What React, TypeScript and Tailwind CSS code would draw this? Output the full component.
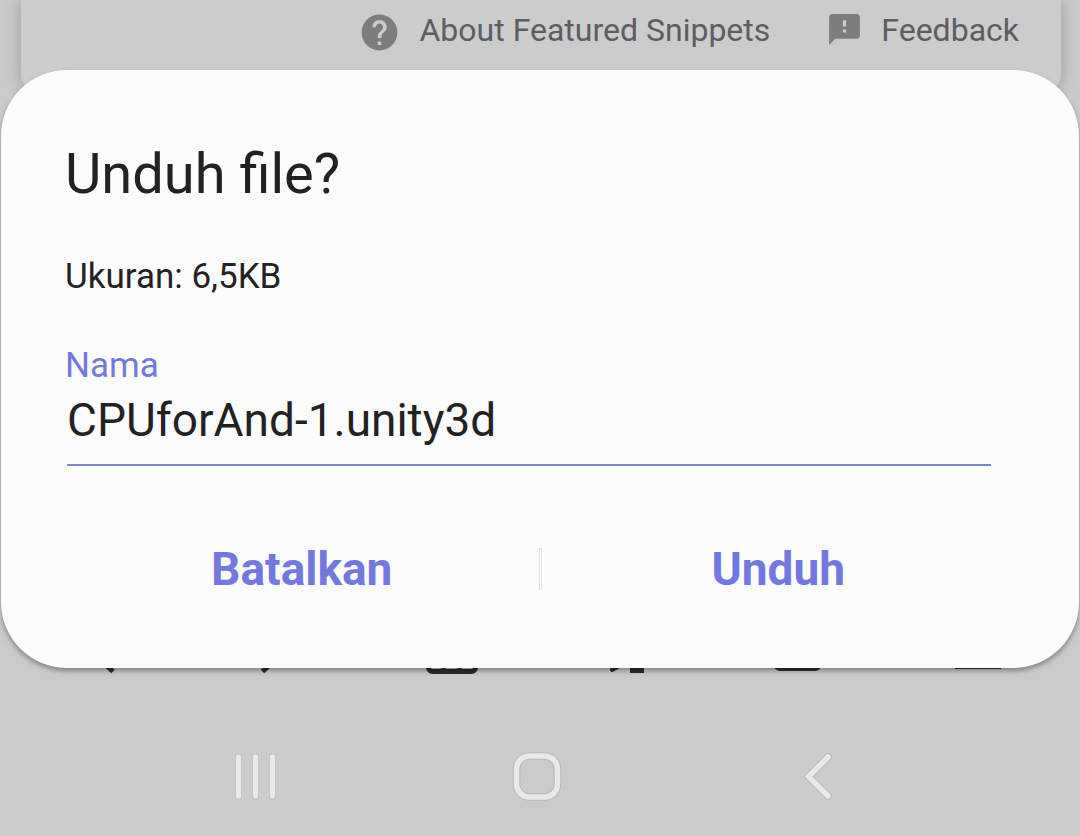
import React, { useState } from "react";
import { MdFeedback, MdHelp } from "react-icons/md";

// Browser bar at the bottom of the page, mostly hidden by the dialog
const toolbarItems = [
  { label: "Kembali", icon: <path d="M38 51.500 12 28 38 5" strokeWidth="5" /> },
  { label: "Maju", icon: <path d="M12.500 51.500 38 28 12.500 5" strokeWidth="5" /> },
  {
    label: "Beranda",
    icon: (
      <>
        <rect x="3.5" y="5" width="47" height="46.5" rx="4" strokeWidth="5" />
        <path d="M3 20h48M18.500 20v31M34.500 20v31" strokeWidth="4" />
      </>
    ),
  },
  {
    label: "Bookmark",
    icon: (
      <>
        <path d="M28 4l7 16 17 2-13 11M28 4l-7 16-17 2 13 12-4 16 9-5" strokeWidth="4" strokeLinejoin="round" />
        <path d="M31 50.500h14M31 42h18" strokeWidth="5" />
      </>
    ),
  },
  { label: "Tab", icon: <rect x="2" y="6" width="43" height="42.500" rx="4" strokeWidth="5" /> },
  { label: "Menu", icon: <path d="M6 10h46M6 28h46M6 47h46" strokeWidth="4" /> },
];

const BrowserToolbar: React.FC = () => (
  <div className="grid h-[140px] grid-cols-6 px-4">
    {toolbarItems.map((item) => (
      <button key={item.label} aria-label={item.label} className="flex items-center justify-center">
        <svg className="h-14 w-14 text-[#2b2b2b]" viewBox="0 0 56 56" fill="none" stroke="currentColor">
          {item.icon}
        </svg>
      </button>
    ))}
  </div>
);

// Every system glyph gets a darker outline below the light stroke
const navItems = [
  { label: "Terbaru", icon: <path d="M10.500 8v39M27.500 8v39M44.500 8v39" />, thin: true },
  { label: "Layar utama", icon: <rect x="7.500" y="7" width="41" height="41" rx="13" />, thin: false },
  { label: "Kembali", icon: <path d="M38 8 18.500 27.500 38 47" />, thin: false },
];

const SystemNav: React.FC = () => (
  <nav className="grid h-[118px] grid-cols-3 pl-[115px] pr-[121px]">
    {navItems.map((item) => (
      <button key={item.label} aria-label={item.label} className="flex items-center justify-center">
        <svg className="h-14 w-14" viewBox="0 0 56 56" fill="none" strokeLinecap="round">
          <g stroke="#b9b9b9" strokeWidth={item.thin ? 7 : 7.5}>{item.icon}</g>
          <g stroke="#e9e9e9" strokeWidth={item.thin ? 5.5 : 5.5}>{item.icon}</g>
        </svg>
      </button>
    ))}
  </nav>
);

const DownloadDialog: React.FC = () => {
  const [name, setName] = useState("CPUforAnd-1.unity3d");

  return (
    <form
      role="dialog"
      aria-labelledby="dialog-title"
      onSubmit={(e) => e.preventDefault()}
      className="absolute inset-x-px top-[70px] flex flex-col rounded-[66px] bg-[#fcfcfc] px-16 pb-[71px] pt-[72px] shadow-[0_3px_5px_rgba(0,0,0,0.35)]"
    >
      <h1 id="dialog-title" className="text-[56px] leading-[64px]">Unduh file?</h1>
      <p className="mt-[51px] text-[35px] leading-10">Ukuran: 6,5KB</p>
      <label htmlFor="file-name" className="mt-[49px] text-[35px] leading-10 text-[#7278e0]">
        Nama
      </label>
      <input
        id="file-name"
        type="text"
        value={name}
        onChange={(e) => setName(e.target.value)}
        className="ml-0.5 mr-6 mt-2 h-[72px] border-b-2 border-[#7d84dc] bg-transparent pb-[18px] text-[46px] leading-[56px] outline-none"
      />
      <div className="mt-[75px] flex items-center text-[46px] font-bold leading-[56px] text-[#7278e0]">
        <button type="button" className="flex-1">Batalkan</button>
        <div className="h-[42px] w-[3px] border border-[#e4e4e4] bg-white" />
        <button type="submit" className="flex-1">Unduh</button>
      </div>
    </form>
  );
};

export default function App() {
  return (
    <div className="relative flex min-h-screen flex-col overflow-hidden bg-[#cbcbcb] font-['Roboto',sans-serif] text-[#222222]">
      <footer className="mb-auto ml-[21px] mr-[19px] flex h-[91px] items-start justify-end gap-[56px] rounded-b-2xl bg-[#cccccc] pr-[42px] pt-2.5 text-[32px] leading-10 text-[#5b5e63] shadow-[0_0_16px_rgba(0,0,0,0.25)]">
        <a href="#snippets" className="flex gap-[18px]">
          <MdHelp className="mt-px h-[43px] w-[43px] text-[#7d7d7d]" />
          About Featured Snippets
        </a>
        <a href="#feedback" className="flex gap-[18px]">
          <MdFeedback className="mt-px h-[37px] w-[37px] text-[#7d7d7d]" />
          Feedback
        </a>
      </footer>
      <BrowserToolbar />
      <SystemNav />
      <DownloadDialog />
    </div>
  );
}
